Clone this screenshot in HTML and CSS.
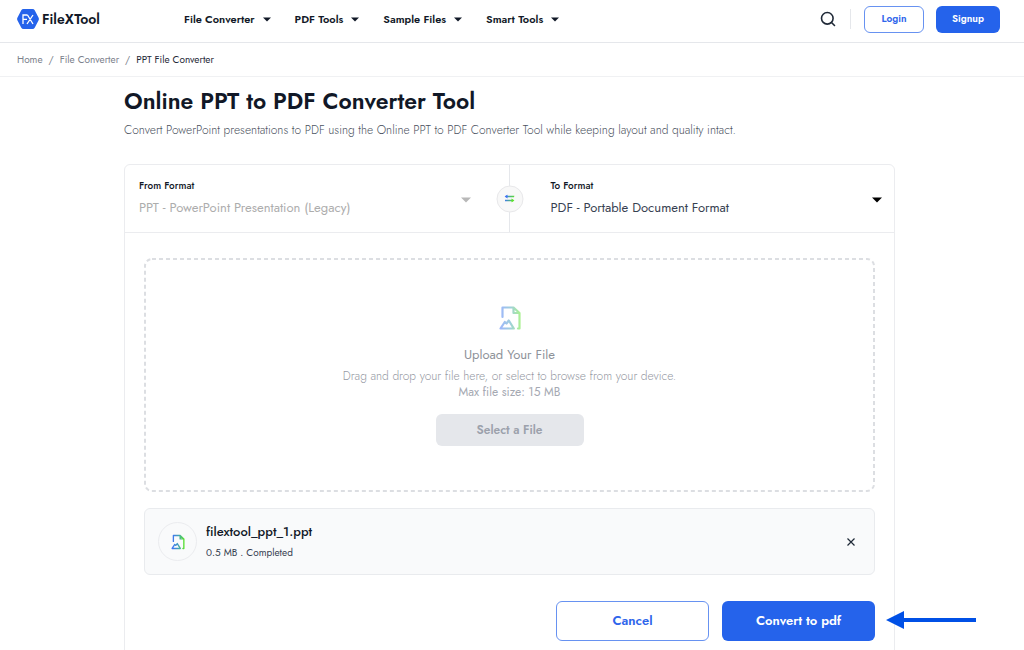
FILE: index.html
```html
<!DOCTYPE html>
<html lang="en">
<head>
    <meta charset="UTF-8">
    <meta name="viewport" content="width=device-width, initial-scale=1.0">
    <title>Online PPT to PDF Converter Tool - FileXTool</title>
    <link rel="stylesheet" href="styles.css">
</head>
<body>
    <!-- shared icons -->
    <svg class="sprite" width="0" height="0" aria-hidden="true">
        <defs>
            <linearGradient id="blue-green" gradientUnits="userSpaceOnUse" x1="2" y1="0" x2="21" y2="0">
                <stop offset="0" stop-color="#3f74f5"/>
                <stop offset="0.5" stop-color="#41a0b8"/>
                <stop offset="1" stop-color="#5be32a"/>
            </linearGradient>
            <linearGradient id="swap-line" gradientUnits="userSpaceOnUse" x1="0" y1="0" x2="10" y2="0">
                <stop offset="0" stop-color="#3f74f5"/>
                <stop offset="1" stop-color="#5be32a"/>
            </linearGradient>
        </defs>
        <symbol id="caret" viewBox="0 0 10 6">
            <path d="M0 0.5h10L5 5.5z" fill="currentColor"/>
        </symbol>
        <symbol id="image-file" viewBox="0 0 22 26">
            <path d="M3.500 12V2.500h11l6 5.500v15.500h-1.500M14.500 2.500V8h6M1.500 23.500L5.800 17l1.700 1.500L9.800 15.500l5 8z" fill="none" stroke="url(#blue-green)" stroke-width="2.200" stroke-linejoin="round" stroke-linecap="round"/>
        </symbol>
    </svg>

    <header class="header">
        <a href="#" class="logo">
            <svg width="22" height="20" viewBox="0 0 22 20" aria-hidden="true">
                <path d="M6.500 0h9q1.500 0 2.200 1.300l3.800 7.200q.8 1.500 0 3l-3.800 7.200Q17 20 15.500 20h-9Q5 20 4.300 18.700L.5 11.500q-.8-1.500 0-3L4.300 1.300Q5 0 6.500 0z" fill="#2563eb"/>
                <path d="M6 15V6h4.500M6 10.300h4M10 15l6-9M10.500 6l5.500 9" fill="none" stroke="#fff" stroke-width="1.300"/>
            </svg>
            <span>FileXTool</span>
        </a>
        <nav class="nav">
            <button type="button">File Converter <svg class="caret"><use href="#caret"/></svg></button>
            <button type="button">PDF Tools <svg class="caret"><use href="#caret"/></svg></button>
            <button type="button">Sample Files <svg class="caret"><use href="#caret"/></svg></button>
            <button type="button">Smart Tools <svg class="caret"><use href="#caret"/></svg></button>
        </nav>
        <div class="account">
            <button type="button" class="search" aria-label="Search">
                <svg width="16" height="16" viewBox="0 0 16 16" fill="none" stroke="#1f2937" stroke-width="1.600" stroke-linecap="round">
                    <circle cx="7.300" cy="7.300" r="5.800"/>
                    <path d="M11.500 11.500L14.500 14.500"/>
                </svg>
            </button>
            <span class="separator"></span>
            <button type="button" class="btn btn-outline btn-small">Login</button>
            <button type="button" class="btn btn-primary btn-small signup">Signup</button>
        </div>
    </header>

    <nav class="breadcrumb" aria-label="Breadcrumb">
        <a href="#">Home</a>
        <span>/</span>
        <a href="#">File Converter</a>
        <span>/</span>
        <a href="#" class="current">PPT File Converter</a>
    </nav>

    <main class="container">
        <h1>Online PPT to PDF Converter Tool</h1>
        <p class="intro">Convert PowerPoint presentations to PDF using the Online PPT to PDF Converter Tool while keeping layout and quality intact.</p>

        <div class="card">
            <div class="formats">
                <div class="format format-from">
                    <label for="from">From Format</label>
                    <div class="select">
                        <select id="from" disabled>
                            <option>PPT - PowerPoint Presentation (Legacy)</option>
                        </select>
                        <svg class="caret"><use href="#caret"/></svg>
                    </div>
                </div>
                <div class="format format-to">
                    <label for="to">To Format</label>
                    <div class="select">
                        <select id="to">
                            <option>PDF - Portable Document Format</option>
                        </select>
                        <svg class="caret"><use href="#caret"/></svg>
                    </div>
                </div>
                <button type="button" class="swap" aria-label="Swap formats">
                    <svg width="10" height="8" viewBox="0 0 10 8">
                        <path d="M2 2h7.500v.01M.5 6H8v.01" fill="none" stroke="url(#swap-line)" stroke-width="1.400"/>
                        <path d="M0 2L3 0v4z" fill="#3f74f5"/>
                        <path d="M10 6L7 4v4z" fill="#5be32a"/>
                    </svg>
                </button>
            </div>

            <div class="card-body">
                <div class="dropzone">
                    <svg class="dropzone-border" aria-hidden="true"><rect width="100%" height="100%" rx="7"/></svg>
                    <svg class="faded" width="22" height="26"><use href="#image-file"/></svg>
                    <h2>Upload Your File</h2>
                    <p>Drag and drop your file here, or select to browse from your device.</p>
                    <p class="limit">Max file size: 15 MB</p>
                    <button type="button" class="btn select-file" disabled>Select a File</button>
                </div>

                <div class="file">
                    <div class="file-icon">
                        <svg width="14" height="16"><use href="#image-file"/></svg>
                    </div>
                    <div class="file-info">
                        <div class="file-name">filextool_ppt_1.ppt</div>
                        <div class="file-status">0.5 MB . Completed</div>
                    </div>
                    <button type="button" class="remove" aria-label="Remove file">
                        <svg width="8" height="8" viewBox="0 0 8 8" stroke="#1f2937" stroke-width="1.200"><path d="M.5.5l7 7M7.500.5l-7 7"/></svg>
                    </button>
                </div>

                <div class="actions">
                    <button type="button" class="btn btn-outline btn-large">Cancel</button>
                    <button type="button" class="btn btn-primary btn-large">Convert to pdf</button>
                    <svg class="pointer" width="90" height="18" viewBox="0 0 90 18" aria-hidden="true">
                        <path d="M0 9L18 0v7h72v4H18v7z" fill="#0050e6"/>
                    </svg>
                </div>
            </div>
        </div>
    </main>
</body>
</html>
```
FILE: styles.css
```css
* {
    margin: 0;
    padding: 0;
    box-sizing: border-box;
}

body {
    font-family: Jost, Lato, sans-serif;
    background: #ffffff;
    color: #111827;
    font-size: 12px;
    line-height: 16px;
}

button,
select {
    font: inherit;
    color: inherit;
    background: none;
    border: none;
}

a {
    color: inherit;
    text-decoration: none;
}

svg {
    display: block;
    flex-shrink: 0;
}

.sprite {
    position: absolute;
}

.caret {
    width: 8px;
    height: 5px;
}

/* Header */
.header {
    display: flex;
    align-items: center;
    height: 43px;
    padding: 0 24px 4px 17px;
    border-bottom: 1px solid #e5e7eb;
}

.logo {
    display: flex;
    align-items: center;
    gap: 3px;
    width: 167px;
    font-size: 14px;
    font-weight: 600;
}

.nav {
    display: flex;
    gap: 24px;
}

.nav button {
    display: flex;
    align-items: center;
    gap: 8px;
    font-size: 11px;
    font-weight: 600;
}

.account {
    display: flex;
    align-items: center;
    margin-left: auto;
}

.separator {
    width: 1px;
    height: 20px;
    margin: 0 13px 0 14px;
    background: #e5e7eb;
}

/* Buttons */
.btn {
    border-radius: 6px;
    font-weight: 600;
    text-align: center;
}

.btn-outline {
    border: 1px solid #6792f1;
    color: #2f66eb;
}

.btn-primary {
    background: #2563eb;
    color: #ffffff;
}

.btn-small {
    width: 60px;
    height: 27px;
    font-size: 10px;
}

.signup {
    width: 64px;
    margin-left: 12px;
}

.btn-large {
    width: 153px;
    height: 40px;
    font-size: 13px;
}

/* Breadcrumb */
.breadcrumb {
    display: flex;
    align-items: center;
    gap: 6px;
    height: 34px;
    padding: 0 17px;
    border-bottom: 1px solid #f0f1f3;
    font-size: 10px;
    color: #7b818c;
}

.breadcrumb .current {
    color: #1f2937;
}

/* Converter */
.container {
    max-width: 776px;
    margin: 0 auto;
    padding: 10px 5px 0 0;
}

h1 {
    font-size: 23px;
    line-height: 28px;
    font-weight: 600;
}

.intro {
    margin-top: 7px;
    font-weight: 300;
    color: #4b5260;
}

.card {
    margin-top: 26px;
    border: 1px solid #ebecef;
    border-radius: 6px;
}

.formats {
    position: relative;
    display: grid;
    grid-template-columns: 1fr 1fr;
    border-bottom: 1px solid #ebecef;
}

.format {
    padding: 13px 12px 13px 14px;
}

.format-from {
    padding-right: 38px;
    border-right: 1px solid #e5e7eb;
}

.format-to {
    padding-left: 41px;
}

.format label {
    display: block;
    font-size: 10px;
    font-weight: 500;
    color: #111827;
}

.select {
    display: flex;
    margin-top: 3px;
}

.select select {
    flex: 1;
    height: 22px;
    appearance: none;
    font-size: 13px;
    color: #374151;
    opacity: 1;
}

.select select:disabled {
    color: #adadad;
}

.select select:disabled + .caret {
    color: #b8b8b8;
}

.select .caret {
    width: 10px;
    height: 6px;
    color: #000000;
}

.swap {
    position: absolute;
    top: 50%;
    left: 50%;
    display: flex;
    align-items: center;
    justify-content: center;
    width: 27px;
    height: 27px;
    transform: translate(-50%, -50%);
    border: 1px solid #e8e8ea;
    border-radius: 50%;
    background: #f8f8f8;
}

.card-body {
    padding: 26px 19px 24px;
}

.dropzone {
    position: relative;
    display: flex;
    flex-direction: column;
    align-items: center;
    padding: 46px 16px 45px;
    color: #b8bbc2;
}

.dropzone-border {
    position: absolute;
    inset: 0 1px;
    width: calc(100% - 2px);
    height: 100%;
    overflow: visible;
    fill: none;
    stroke: #dcdee2;
    stroke-width: 2px;
    stroke-dasharray: 4 3;
}

.faded {
    opacity: 0.5;
}

.dropzone h2 {
    margin: 15px 0 4px;
    font-size: 13px;
    line-height: 18px;
    font-weight: 400;
    color: #8e9299;
}

.dropzone p {
    font-weight: 300;
    color: #9599a3;
}

.dropzone .limit {
    font-weight: 400;
    color: #a5a9b2;
}

.select-file {
    width: 148px;
    height: 32px;
    margin-top: 14px;
    background: #e5e7eb;
    color: #9ca1ab;
}

.file {
    display: flex;
    align-items: center;
    margin-top: 17px;
    padding: 13px 19px 13px 13px;
    border: 1px solid #e9ebee;
    border-radius: 6px;
    background: #f9fafb;
}

.file-icon {
    display: flex;
    align-items: center;
    justify-content: center;
    width: 39px;
    height: 39px;
    margin-right: 9px;
    border: 1px solid #ebecef;
    border-radius: 50%;
}

.file-name {
    font-size: 13px;
    line-height: 18px;
    font-weight: 500;
}

.file-status {
    margin-top: 4px;
    font-size: 10px;
    color: #374151;
}

.remove {
    margin-left: auto;
}

.actions {
    position: relative;
    display: flex;
    justify-content: flex-end;
    gap: 13px;
    margin-top: 26px;
}

/* Arrow that points at the convert button */
.pointer {
    position: absolute;
    top: 10px;
    left: calc(100% + 11px);
}
```
